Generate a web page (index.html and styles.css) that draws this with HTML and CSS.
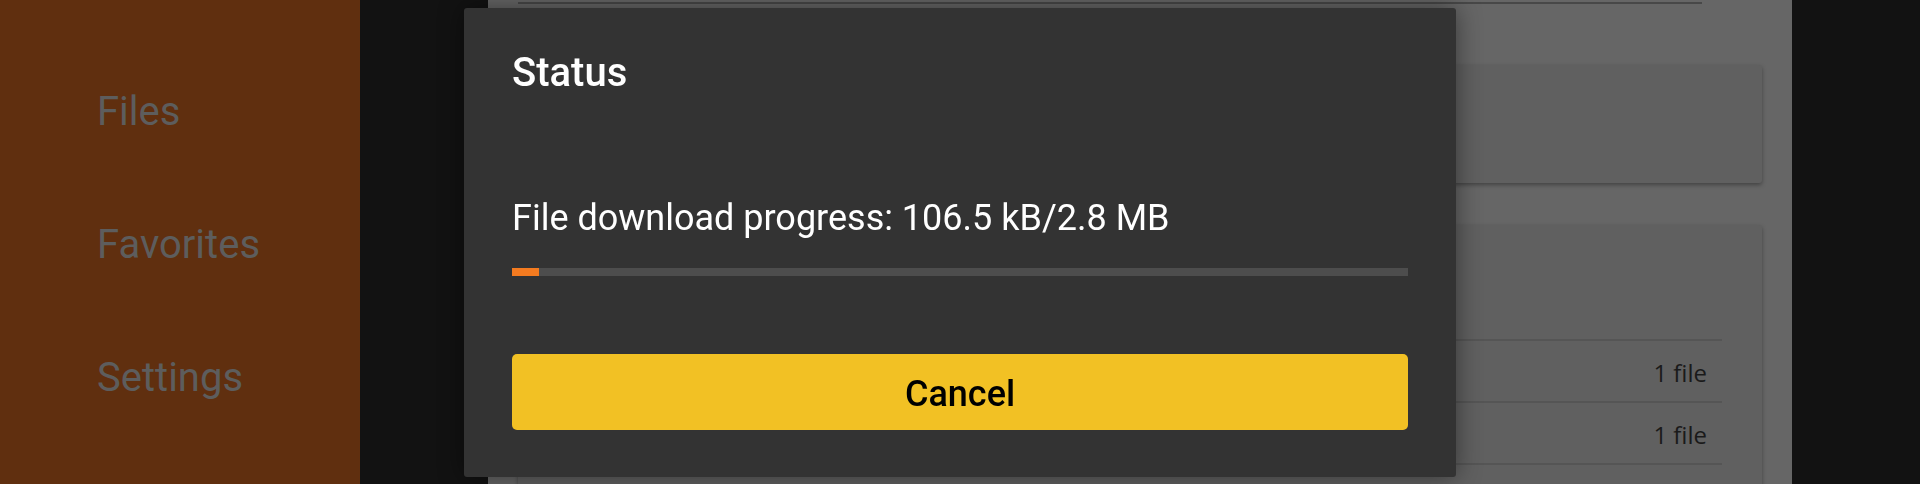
FILE: index.html
```html
<!DOCTYPE html>
<html lang="en">
<head>
<meta charset="utf-8">
<title>Status</title>
<link rel="stylesheet" href="styles.css">
</head>
<body>
<div class="app">
  <nav class="sidebar">
    <div class="nav-item">Files</div>
    <div class="nav-item">Favorites</div>
    <div class="nav-item">Settings</div>
  </nav>
  <div class="stage">
    <main class="main">
      <div class="search-line"></div>
      <section class="card card-top"></section>
      <section class="card card-list">
        <div class="card-head"></div>
        <div class="row"><span class="count">1 file</span></div>
        <div class="row"><span class="count">1 file</span></div>
        <div class="row row-last"></div>
      </section>
    </main>
  </div>
</div>

<div class="overlay">
  <div class="dialog" role="dialog">
    <h2 class="dialog-title">Status</h2>
    <p class="dialog-msg">File download progress: 106.5 kB/2.8 MB</p>
    <div class="progress"><div class="progress-fill" style="width: 3%"></div></div>
    <button class="btn-cancel">Cancel</button>
  </div>
</div>
</body>
</html>
```

FILE: styles.css
```css
* { box-sizing: border-box; }

html, body {
  margin: 0;
  padding: 0;
  width: 1920px;
  height: 484px;
  overflow: hidden;
  background: #121212;
  font-family: Roboto, "Liberation Sans", sans-serif;
}

.app {
  display: flex;
  width: 1920px;
  height: 484px;
  overflow: hidden;
}

.sidebar {
  width: 360px;
  flex: none;
  background: #602f0f;
  padding: 88px 0 0 97px;
  display: flex;
  flex-direction: column;
  gap: 85px;
}

.nav-item {
  font-size: 40px;
  line-height: 48px;
  color: #5d5d5d;
}

.stage {
  flex: 1;
  display: flex;
  justify-content: center;
  background: #121212;
}

.main {
  width: 1304px;
  background: #666666;
  padding: 2px 30px 0 30px;
  display: flex;
  flex-direction: column;
  overflow: hidden;
}

.search-line {
  height: 2px;
  background: #484848;
  margin-right: 60px;
  flex: none;
}

.card {
  background: #606060;
  border-radius: 3px;
  box-shadow: 0 2px 4px rgba(0, 0, 0, 0.35);
  flex: none;
}

.card-top {
  margin-top: 61px;
  height: 118px;
}

.card-list {
  margin-top: 42px;
  padding: 0 40px;
  height: 300px;
}

.card-head {
  height: 114px;
}

.row {
  border-top: 2px solid #555555;
  height: 62px;
  padding: 2px 15px 0 0;
  display: flex;
  align-items: center;
  justify-content: flex-end;
}

.count {
  font-family: "Open Sans", "Noto Sans", sans-serif;
  font-size: 24px;
  color: #1a1a1a;
}

.overlay {
  position: fixed;
  inset: 0;
  display: flex;
  align-items: center;
  justify-content: center;
}

.dialog {
  width: 992px;
  height: 469px;
  background: #333333;
  border-radius: 3px;
  box-shadow: 0 0 26px rgba(0, 0, 0, 0.45);
  padding: 41px 48px 47px;
  display: flex;
  flex-direction: column;
}

.dialog-title {
  margin: 0;
  font-size: 40px;
  line-height: 48px;
  font-weight: 500;
  color: #ffffff;
}

.dialog-msg {
  margin: 100px 0 0;
  font-size: 36px;
  line-height: 42px;
  font-weight: 400;
  color: #ffffff;
}

.progress {
  margin-top: 29px;
  height: 8px;
  background: #4d4d4d;
  flex: none;
}

.progress-fill {
  height: 100%;
  background: #f47b20;
}

.btn-cancel {
  margin-top: 78px;
  height: 76px;
  padding: 4px 0 0;
  border: none;
  border-radius: 5px;
  background: #f2c124;
  color: #000000;
  font-family: Roboto, "Liberation Sans", sans-serif;
  font-size: 36px;
  line-height: 72px;
  font-weight: 500;
  flex: none;
}
```
